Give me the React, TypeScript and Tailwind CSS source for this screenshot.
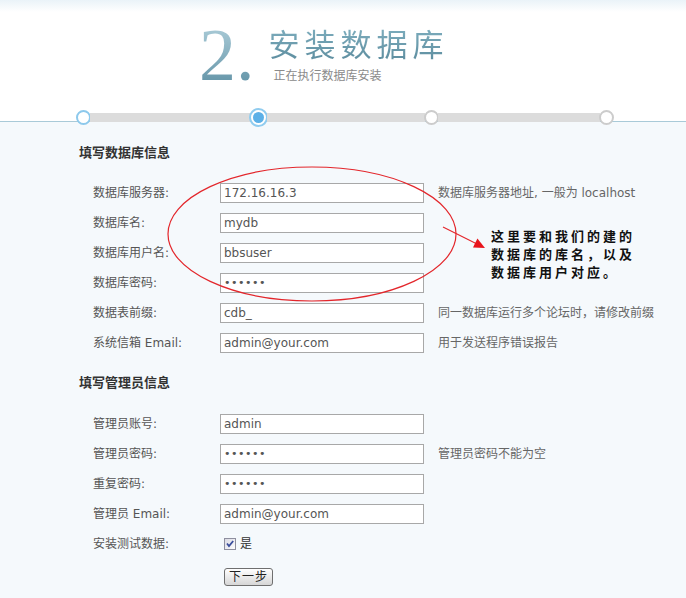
import React from "react";

function Field({ value, dots }: { value: string; dots?: boolean }) {
  return (
    <div
      className={
        "w-[204px] h-[20px] border border-[#a8a8a8] bg-white px-[3px] leading-[18px] text-[#555] " +
        (dots ? "text-[11px] tracking-[0.5px]" : "text-[12px]")
      }
    >
      {value}
    </div>
  );
}

function Row({
  label,
  children,
  hint,
}: {
  label: string;
  children: React.ReactNode;
  hint?: string;
}) {
  return (
    <div className="flex h-[30px] items-center">
      <div className="w-[127px] text-[12px] text-[#555] whitespace-nowrap">{label}</div>
      {children}
      {hint && <div className="ml-[14px] text-[12px] text-[#666] whitespace-nowrap">{hint}</div>}
    </div>
  );
}

function Progress() {
  return (
    <div className="absolute left-[76px] top-[108px] flex h-[19px] items-center">
      <div className="w-[15px] h-[15px] rounded-full border-2 border-[#8dc9ec] bg-white" />
      <div className="w-[160px] h-[9px] bg-[#dcdcdc] -mx-px" />
      <div className="w-[19px] h-[19px] rounded-full border-2 border-[#90ccef] bg-white flex items-center justify-center">
        <div className="w-[11px] h-[11px] rounded-full bg-[#5cb0e7]" />
      </div>
      <div className="w-[158px] h-[9px] bg-[#dcdcdc] -mx-px" />
      <div className="w-[15px] h-[15px] rounded-full border-2 border-[#cccccc] bg-white" />
      <div className="w-[162px] h-[9px] bg-[#dcdcdc] -mx-px" />
      <div className="w-[15px] h-[15px] rounded-full border-2 border-[#cccccc] bg-white" />
    </div>
  );
}

export default function App() {
  return (
    <div className="relative w-[686px] min-h-[598px] flex flex-col bg-[#f5f9fc] font-['DejaVu_Sans','Noto_Sans_CJK_SC',sans-serif]">
      {/* header */}
      <div className="relative h-[122px] border-b border-[#a9cad8] bg-[linear-gradient(to_bottom,#eaf3f8,#ffffff_12px)]">
        <div className="flex items-start pl-[199px] pt-[18px]">
          <div className="font-['Liberation_Serif',serif] text-[74px] leading-[74px] bg-gradient-to-b from-[#b4d3de] to-[#5b8ea2] bg-clip-text text-transparent">
            2.
          </div>
          <div className="ml-[14px] mt-[2px] flex flex-col">
            <div className="font-['Noto_Sans_CJK_SC',sans-serif] text-[31px] leading-[45px] tracking-[5px] bg-gradient-to-b from-[#84b4c4] to-[#5a8a9c] bg-clip-text text-transparent">
              安装数据库
            </div>
            <div className="mt-[1px] ml-[5px] text-[12px] leading-[17px] text-[#8a8a8a] font-['Noto_Sans_CJK_SC',sans-serif]">
              正在执行数据库安装
            </div>
          </div>
        </div>
        <Progress />
      </div>

      {/* body */}
      <div className="flex-1 pl-[79px] pt-[21px]">
        <div className="h-[20px] leading-[20px] text-[13px] font-bold text-[#333]">填写数据库信息</div>
        <div className="mt-[15px] pl-[14px]">
          <Row label="数据库服务器:" hint="数据库服务器地址, 一般为 localhost">
            <Field value="172.16.16.3" />
          </Row>
          <Row label="数据库名:">
            <Field value="mydb" />
          </Row>
          <Row label="数据库用户名:">
            <Field value="bbsuser" />
          </Row>
          <Row label="数据库密码:">
            <Field value="••••••" dots />
          </Row>
          <Row label="数据表前缀:" hint="同一数据库运行多个论坛时，请修改前缀">
            <Field value="cdb_" />
          </Row>
          <Row label="系统信箱 Email:" hint="用于发送程序错误报告">
            <Field value="admin@your.com" />
          </Row>
        </div>

        <div className="mt-[15px] h-[20px] leading-[20px] text-[13px] font-bold text-[#333]">填写管理员信息</div>
        <div className="mt-[16px] pl-[14px]">
          <Row label="管理员账号:">
            <Field value="admin" />
          </Row>
          <Row label="管理员密码:" hint="管理员密码不能为空">
            <Field value="••••••" dots />
          </Row>
          <Row label="重复密码:">
            <Field value="••••••" dots />
          </Row>
          <Row label="管理员 Email:">
            <Field value="admin@your.com" />
          </Row>
          <Row label="安装测试数据:">
            <div className="ml-[4px] flex items-center">
              <svg width="12" height="12" viewBox="0 0 12 12">
                <defs>
                  <linearGradient id="cb" x1="0" y1="0" x2="1" y2="1">
                    <stop offset="0" stopColor="#d8d8e2" />
                    <stop offset="1" stopColor="#ffffff" />
                  </linearGradient>
                </defs>
                <rect x="0.5" y="0.5" width="11" height="11" fill="url(#cb)" stroke="#8e8f9f" />
                <path d="M3 5.5 L5 8 L9.2 3" fill="none" stroke="#3a4e9c" strokeWidth="1.8" />
              </svg>
              <span className="ml-[4px] text-[12px] text-[#333]">是</span>
            </div>
          </Row>
          <div className="flex mt-[9px] pb-[10px]">
            <div className="w-[127px]" />
            <button className="ml-[4px] w-[49px] h-[18px] rounded-[3px] border border-[#6f6f6f] bg-gradient-to-b from-white to-[#d6d6d6] text-[12px] leading-[16px] text-[#222] tracking-[1px]">
              下一步
            </button>
          </div>
        </div>
      </div>

      {/* annotation overlay */}
      <svg
        className="absolute left-0 top-0 pointer-events-none"
        width="686"
        height="598"
        viewBox="0 0 686 598"
      >
        <ellipse cx="312" cy="234" rx="144" ry="67" fill="none" stroke="#e3262b" strokeWidth="1.2" />
        <line x1="443" y1="227" x2="476" y2="243.5" stroke="#e3262b" strokeWidth="1.2" />
        <polygon points="485,248 473,247.6 477.4,238.6" fill="#e8141c" />
      </svg>
      <div className="absolute left-[491px] top-[227px] text-[13px] leading-[18px] tracking-[3px] font-bold text-[#111] font-['Noto_Sans_CJK_SC',sans-serif]">
        <div>这里要和我们的建的</div>
        <div>数据库的库名，以及</div>
        <div>数据库用户对应。</div>
      </div>
    </div>
  );
}
